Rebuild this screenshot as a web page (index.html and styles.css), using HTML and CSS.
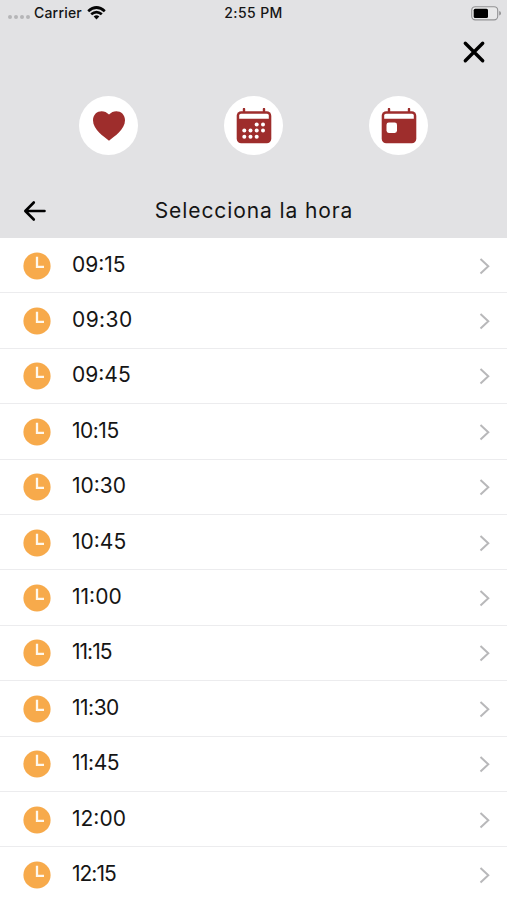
FILE: index.html
```html
<!DOCTYPE html>
<html lang="es">
<head>
<meta charset="utf-8">
<meta name="viewport" content="width=device-width">
<title>Selecciona la hora</title>
<link rel="stylesheet" href="styles.css">
</head>
<body>
<svg class="defs" aria-hidden="true">
  <symbol id="clock" viewBox="0 0 28 28"><circle cx="14" cy="14" r="13.6" fill="#f7aa4b"/><path d="M14 4.8V14.8H21" fill="none" stroke="#fff8ec" stroke-width="2.3"/></symbol>
  <symbol id="chevron" viewBox="0 0 12 18"><path d="M1.5 2L9.3 9.3L1.5 16.6" fill="none" stroke="#b8b8ba" stroke-width="2"/></symbol>
</svg>
<header class="header">
  <div class="status">
    <div class="carrier"><span class="signal"><i></i><i></i><i></i><i></i></span><span>Carrier</span>
      <svg class="wifi" width="19" height="14" viewBox="0 0 19 14" fill="none" stroke="#050505" stroke-width="2.7"><path d="M1.2 5.2Q9.5-2.2 17.8 5.2M4.2 8.3Q9.5 3.8 14.8 8.3"/><path d="M6.7 10.5Q9.5 8.2 12.3 10.5L9.5 13.5Z" fill="#050505" stroke="none"/></svg>
    </div>
    <span class="now">2:55 PM</span>
    <svg class="battery" width="31" height="15" viewBox="0 0 31 15"><rect x=".7" y=".7" width="26" height="13.2" rx="3.6" fill="#e8e8e9" stroke="#929294" stroke-width="1.1"/><rect x="2.7" y="2.7" width="14.3" height="9.2" rx="1.5"/><path d="M28.2 5Q30 5.5 30 7.3T28.2 9.6Z" fill="#929294"/></svg>
  </div>
  <div class="closebar"><svg width="24" height="24" viewBox="0 0 24 24"><path d="M3.3 3.3L20.7 20.7M20.7 3.3L3.3 20.7" stroke="#000" stroke-width="3.4" stroke-linecap="round"/></svg></div>
  <nav class="steps">
    <span class="step"><svg width="34" height="34" viewBox="0 0 34 34"><path d="M17 31.8C12 27.5 1 20.5 1 11.2C1 2 11.5-.8 17 5.6C22.5-.8 33 2 33 11.2C33 20.5 22 27.5 17 31.8Z" fill="#9e2d2c"/></svg></span>
    <span class="step"><svg width="36" height="36" viewBox="0 0 36 36"><path d="M8 1V5M28 1V5" stroke="#9e2d2c" stroke-width="2.4" stroke-linecap="round"/><rect x=".7" y="3.3" width="34.6" height="32" rx="4.5" fill="#9e2d2c"/><path d="M3.2 10.8V7.5Q3.2 5.8 5 5.8H31Q32.8 5.8 32.8 7.5V10.8Z" fill="#fff"/><g fill="#fff"><circle cx="20.7" cy="16.5" r="2"/><circle cx="27" cy="16.5" r="2"/><circle cx="8.3" cy="22.6" r="2"/><circle cx="14.5" cy="22.6" r="2"/><circle cx="20.7" cy="22.6" r="2"/><circle cx="27" cy="22.6" r="2"/><circle cx="8.3" cy="28.7" r="2"/><circle cx="14.5" cy="28.7" r="2"/><circle cx="20.7" cy="28.7" r="2"/></g></svg></span>
    <span class="step"><svg width="36" height="36" viewBox="0 0 36 36"><path d="M8 1V5M28 1V5" stroke="#9e2d2c" stroke-width="2.4" stroke-linecap="round"/><rect x=".7" y="3.3" width="34.6" height="32" rx="4.5" fill="#9e2d2c"/><path d="M3.2 10.8V7.5Q3.2 5.8 5 5.8H31Q32.8 5.8 32.8 7.5V10.8Z" fill="#fff"/><rect x="5.5" y="14.4" width="10.5" height="10.5" rx="2.3" fill="#fff"/></svg></span>
  </nav>
  <div class="titlebar">
    <svg width="24" height="22" viewBox="0 0 24 22" fill="none" stroke="#000" stroke-width="2.6" stroke-linecap="round" stroke-linejoin="round"><path d="M21.5 11H3M10.8 2.5L2.3 11L10.8 19.5"/></svg>
    <h1>Selecciona la hora</h1>
  </div>
</header>
<ul class="slots">
  <li><svg class="clock"><use href="#clock"/></svg><span>09:15</span><svg class="chevron"><use href="#chevron"/></svg></li>
  <li class="wide"><svg class="clock"><use href="#clock"/></svg><span>09:30</span><svg class="chevron"><use href="#chevron"/></svg></li>
  <li><svg class="clock"><use href="#clock"/></svg><span>09:45</span><svg class="chevron"><use href="#chevron"/></svg></li>
  <li class="snug"><svg class="clock"><use href="#clock"/></svg><span>10:15</span><svg class="chevron"><use href="#chevron"/></svg></li>
  <li><svg class="clock"><use href="#clock"/></svg><span>10:30</span><svg class="chevron"><use href="#chevron"/></svg></li>
  <li><svg class="clock"><use href="#clock"/></svg><span>10:45</span><svg class="chevron"><use href="#chevron"/></svg></li>
  <li><svg class="clock"><use href="#clock"/></svg><span>11:00</span><svg class="chevron"><use href="#chevron"/></svg></li>
  <li class="tight"><svg class="clock"><use href="#clock"/></svg><span>11:15</span><svg class="chevron"><use href="#chevron"/></svg></li>
  <li class="snug"><svg class="clock"><use href="#clock"/></svg><span>11:30</span><svg class="chevron"><use href="#chevron"/></svg></li>
  <li class="snug"><svg class="clock"><use href="#clock"/></svg><span>11:45</span><svg class="chevron"><use href="#chevron"/></svg></li>
  <li><svg class="clock"><use href="#clock"/></svg><span>12:00</span><svg class="chevron"><use href="#chevron"/></svg></li>
  <li class="tight"><svg class="clock"><use href="#clock"/></svg><span>12:15</span><svg class="chevron"><use href="#chevron"/></svg></li>
</ul>
</body>
</html>
```
FILE: styles.css
```css
* { box-sizing: border-box; }
body { margin: 0; height: 900px; overflow: hidden; background: #fff; color: #151515; font-family: Inter, "Liberation Sans", sans-serif; }
svg { display: block; flex: none; }
.defs { display: none; }
.header { height: 238px; background: #e2e2e4; }
.status { height: 26px; display: grid; grid-template-columns: 1fr auto 1fr; align-items: center; padding: 0 5px 0 8px; font-size: 14px; font-weight: 500; }
.carrier { display: flex; align-items: center; letter-spacing: .2px; line-height: 16px; padding-bottom: 1px; }
.signal { display: flex; gap: 2px; width: 26px; padding-top: 8px; }
.signal i { width: 4px; height: 4px; border-radius: 50%; background: #b5b5b7; }
.wifi { margin-left: 5px; }
.now { letter-spacing: .4px; margin-right: 3px; line-height: 16px; padding-bottom: 1px; }
.battery { justify-self: end; }
.closebar { height: 52px; padding: 14px 21px 0 0; display: flex; justify-content: flex-end; }
.steps { height: 77px; padding: 18px 79px 0; display: flex; justify-content: space-between; }
.step { width: 59px; height: 59px; border-radius: 50%; background: #fff; display: grid; place-items: center; }
.titlebar { height: 83px; padding: 29px 24px 0 23px; display: grid; grid-template-columns: 24px 1fr 24px; align-items: center; }
h1 { margin: 0; text-align: center; font-size: 21px; line-height: 26px; font-weight: 400; letter-spacing: .9px; padding-left: 2px; }
.slots { margin: 0; padding: 0; list-style: none; }
.slots li { height: 55.4px; display: flex; align-items: center; border-bottom: 1.5px solid #ececee; padding: 1px 16px 0 23px; font-size: 21px; }
.slots span { margin-left: 21px; flex: 1; line-height: 26px; padding-bottom: 2px; }
.slots .wide { letter-spacing: .4px; }
.slots .snug { letter-spacing: -.5px; }
.slots .tight { letter-spacing: -1px; }
.clock { width: 28px; height: 28px; }
.chevron { width: 12px; height: 18px; }
```
